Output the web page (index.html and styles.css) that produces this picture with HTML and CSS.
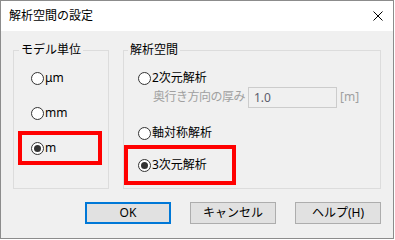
FILE: index.html
```html
<!DOCTYPE html>
<html lang="ja">
<head>
<meta charset="utf-8">
<title>解析空間の設定</title>
<link rel="stylesheet" href="styles.css">
</head>
<body>
<div class="dlg">
	<div class="cap">
		<span class="cap-t">解析空間の設定</span>
		<svg class="cls" width="10" height="10" viewBox="0 0 10 10"><path d="M0.5 0.5L9.5 9.5M9.5 0.5L0.5 9.5" stroke="#000" stroke-width="1" fill="none"/></svg>
	</div>
	<div class="main">
		<div class="grps">
			<fieldset class="grp g1">
				<legend>モデル単位</legend>
				<div class="opts">
					<div class="opt"><span class="rb"></span>μm</div>
					<div class="opt"><span class="rb"></span>mm</div>
					<div class="opt hl"><span class="rb on"></span>m</div>
				</div>
			</fieldset>
			<fieldset class="grp g2">
				<legend>解析空間</legend>
				<div class="opts">
					<div class="opt r1"><span class="rb"></span>2次元解析</div>
					<div class="sub">
						<span class="sub-t">奥行き方向の厚み</span>
						<span class="txt">1.0</span>
						<span class="unit">[m]</span>
					</div>
					<div class="opt r2"><span class="rb"></span>軸対称解析</div>
					<div class="opt r3 hl"><span class="rb on"></span>3次元解析</div>
				</div>
			</fieldset>
		</div>
		<div class="btns">
			<button class="btn def">OK</button>
			<button class="btn">キャンセル</button>
			<button class="btn">ヘルプ(H)</button>
		</div>
	</div>
</div>
</body>
</html>
```

FILE: styles.css
```css
*{ margin:0; padding:0; box-sizing:border-box;}
body{ background:#fff; font-family:"Noto Sans","Noto Sans CJK JP",sans-serif; font-size:12px; color:#000;}
.dlg{ width:394px; height:239px; border:1px solid #8c8c8c; background:#f0f0f0; display:flex; flex-direction:column;}
.cap{ height:30px; background:#fff; display:flex; align-items:center; justify-content:space-between; padding:0 10px 0 8px;}
.cap-t{ line-height:16px;}
.cls{ display:block;}
.main{ padding:11px 12px 0 12px; display:flex; flex-direction:column;}
.grps{ display:flex; gap:14px;}
.grp{ border:1px solid #dcdcdc; height:147px; min-width:0;}
.grp legend{ margin-left:5px; padding:0 2px; line-height:16px;}
.g1{ width:96px;}
.g2{ width:258px;}
.g2 legend{ margin-left:4px;}
.opts{ display:flex; flex-direction:column;}
.g1 .opts{ padding:7px 0 0 8px; gap:9px;}
.g2 .opts{ padding:0 0 0 4px;}
.opt{ display:flex; align-items:center; gap:1px; height:26px; line-height:16px;}
.g1 .opt{ width:76px; padding-left:9px;}
.g2 .opt{ width:104px; padding-left:10px;}
.g2 .r1{ height:18px; margin-top:11px;}
.g2 .r2{ margin-top:13px;}
.g2 .r3{ height:32px; margin-top:3px;}
.hl{ outline:4px solid #ff0000;}
.rb{ width:13px; height:13px; border:1px solid #333; border-radius:50%; background:#fff; display:flex; align-items:center; justify-content:center; flex:none;}
.rb.on::after{ content:""; width:7px; height:7px; border-radius:50%; background:#333;}
.sub{ display:flex; align-items:center; height:20px; padding-left:25px; line-height:16px;}
.sub-t{ width:95px; color:#a0a0a0; letter-spacing:-0.5px; white-space:nowrap;}
.txt{ width:89px; height:21px; border:1px solid #cccccc; padding-left:5px; line-height:19px; color:#5c5c6c;}
.unit{ margin-left:3px; color:#a0a0a0;}
.btns{ display:flex; justify-content:flex-end; gap:19px; margin-top:13px;}
.btn{ width:86px; height:22px; border:1px solid #adadad; background:#e1e1e1; font:inherit; line-height:18px; color:#000;}
.btn.def{ border:2px solid #0078d7;}
```
